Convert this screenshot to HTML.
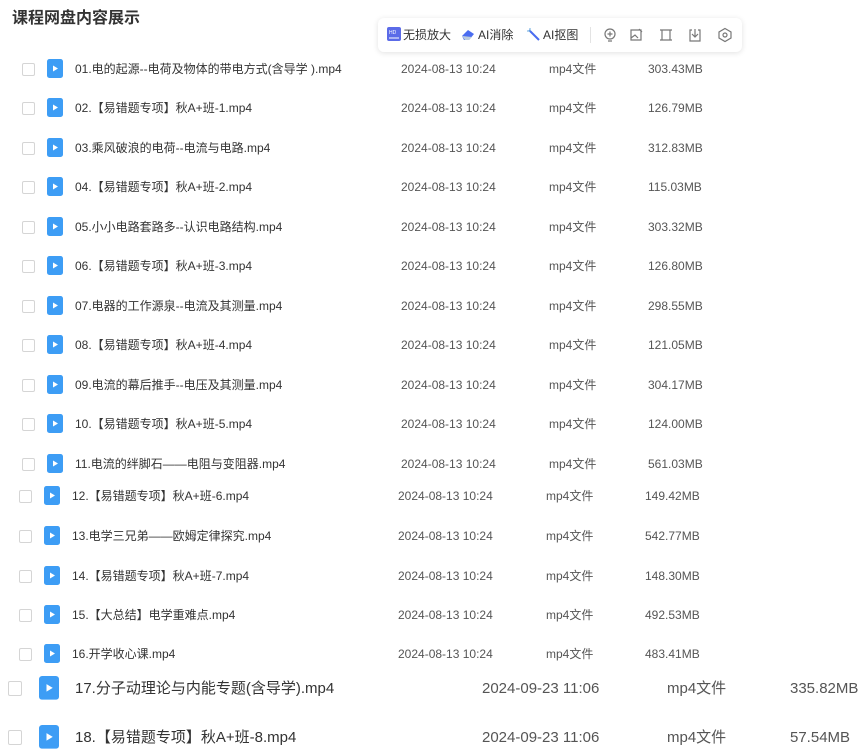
<!DOCTYPE html>
<html><head><meta charset="utf-8"><style>
body{margin:0;width:859px;height:745px;background:#fff;overflow:hidden;position:relative;font-family:"Liberation Sans","Noto Sans CJK SC",sans-serif;color:#333}
.t{position:absolute;left:12px;top:9px;font-size:16px;font-weight:bold;color:#333;line-height:20px}
.r{position:absolute;left:0;width:859px;height:20px;font-size:12px;color:#333}
.r span{position:absolute;top:2px;white-space:nowrap;line-height:16px;height:16px}
.cb{position:absolute;top:4px;width:11px;height:11px;border:1px solid #d5d5d5;border-radius:2px;background:#fff}
.ic{position:absolute;top:0}
.d,.ty,.sz{color:#555}
.L{font-size:15px;height:24px}
.L span{top:3px;line-height:20px;height:20px}
.L .cb{top:5px;width:12px;height:13px}
.tb{position:absolute;left:378px;top:18px;width:364px;height:34px;background:#fff;border-radius:6px;box-shadow:0 1px 6px rgba(0,0,0,.12);font-size:12px;color:#333}
.tb span{position:absolute;top:9px;white-space:nowrap;line-height:16px}
</style></head><body>
<div class="t">课程网盘内容展示</div>
<div class="tb">
<svg style="position:absolute;left:9px;top:9px" width="14" height="14"><rect width="14" height="14" rx="2" fill="#5b6be8"/><text x="2" y="7" font-size="5" fill="#fff" font-family="Liberation Sans">HD</text><path d="M2 11h10" stroke="#fff"/></svg>
<span style="left:25px">无损放大</span>
<svg style="position:absolute;left:83px;top:10px" width="15" height="13"><path d="M1 8l6-6 6 4-5 6H3z" fill="#4a6cf0"/><path d="M1 8l3 4h4l3-3" fill="#bcd" /></svg>
<span style="left:100px">AI消除</span>
<svg style="position:absolute;left:149px;top:10px" width="14" height="14"><path d="M2 2l10 10" stroke="#4a6cf0" stroke-width="2"/><path d="M3 0v3M0 3h3" stroke="#6ad" /></svg>
<span style="left:165px">AI抠图</span>
<div style="position:absolute;left:212px;top:9px;width:1px;height:16px;background:#e3e3e3"></div>
<svg style="position:absolute;left:224px;top:9px" width="16" height="16" fill="none" stroke="#777" stroke-width="1.2"><circle cx="8" cy="7" r="5"/><path d="M8 4.5v5M5.5 7h5M6 14h4"/></svg>
<svg style="position:absolute;left:251px;top:9px" width="16" height="16" fill="none" stroke="#777" stroke-width="1.2"><path d="M2 3h10v10H2zM2 11l4-3 3 3M10 2l3 3"/></svg>
<svg style="position:absolute;left:280px;top:9px" width="16" height="16" fill="none" stroke="#777" stroke-width="1.2"><path d="M4 3h8v10H4zM2 3h2M12 3h2M2 13h2M12 13h2"/></svg>
<svg style="position:absolute;left:309px;top:9px" width="16" height="16" fill="none" stroke="#777" stroke-width="1.2"><path d="M5 3H3v11h10V3h-2M8 2v8M5 7l3 3 3-3"/></svg>
<svg style="position:absolute;left:339px;top:9px" width="16" height="16" fill="none" stroke="#777" stroke-width="1.2"><path d="M8 1.5l6 3.5v6l-6 3.5-6-3.5v-6z"/><circle cx="8" cy="8" r="2"/></svg>
</div>

<div id="rows"></div>
<script>
var ico='<svg width="16" height="19" viewBox="0 0 16 19"><rect width="16" height="19" rx="2.5" fill="#3d9df5"/><path d="M6 6.5l5 3-5 3z" fill="#fff"/></svg>';
var A=[
["01.电的起源--电荷及物体的带电方式(含导学 ).mp4","303.43MB"],
["02.【易错题专项】秋A+班-1.mp4","126.79MB"],
["03.乘风破浪的电荷--电流与电路.mp4","312.83MB"],
["04.【易错题专项】秋A+班-2.mp4","115.03MB"],
["05.小小电路套路多--认识电路结构.mp4","303.32MB"],
["06.【易错题专项】秋A+班-3.mp4","126.80MB"],
["07.电器的工作源泉--电流及其测量.mp4","298.55MB"],
["08.【易错题专项】秋A+班-4.mp4","121.05MB"],
["09.电流的幕后推手--电压及其测量.mp4","304.17MB"],
["10.【易错题专项】秋A+班-5.mp4","124.00MB"],
["11.电流的绊脚石——电阻与变阻器.mp4","561.03MB"],
["12.【易错题专项】秋A+班-6.mp4","149.42MB"],
["13.电学三兄弟——欧姆定律探究.mp4","542.77MB"],
["14.【易错题专项】秋A+班-7.mp4","148.30MB"],
["15.【大总结】电学重难点.mp4","492.53MB"],
["16.开学收心课.mp4","483.41MB"],
["17.分子动理论与内能专题(含导学).mp4","335.82MB"],
["18.【易错题专项】秋A+班-8.mp4","57.54MB"]];
var Y=[69,108,148,187,227,266,306,345,385,424,464,496,536,576,615,654,688,737];
var h='';
for(var i=0;i<18;i++){
 var big=i>=16, o=i>=11&&!big?-3:0;
 if(big){
  h+='<div class="r L" style="top:'+(Y[i]-12)+'px"><div class="cb" style="left:8px"></div><div class="ic" style="left:39px;transform:scale(1.25);transform-origin:0 0">'+ico+'</div><span style="left:75px">'+A[i][0]+'</span><span class="d" style="left:482px">2024-09-23 11:06</span><span class="ty" style="left:667px">mp4文件</span><span class="sz" style="left:790px">'+A[i][1]+'</span></div>';
 }else{
  h+='<div class="r" style="top:'+(Y[i]-10)+'px"><div class="cb" style="left:'+(22+o)+'px"></div><div class="ic" style="left:'+(47+o)+'px">'+ico+'</div><span style="left:'+(75+o)+'px">'+A[i][0]+'</span><span class="d" style="left:'+(401+o)+'px">2024-08-13 10:24</span><span class="ty" style="left:'+(549+o)+'px">mp4文件</span><span class="sz" style="left:'+(648+o)+'px">'+A[i][1]+'</span></div>';
 }
}
document.getElementById('rows').innerHTML=h;
</script>
</body></html>
